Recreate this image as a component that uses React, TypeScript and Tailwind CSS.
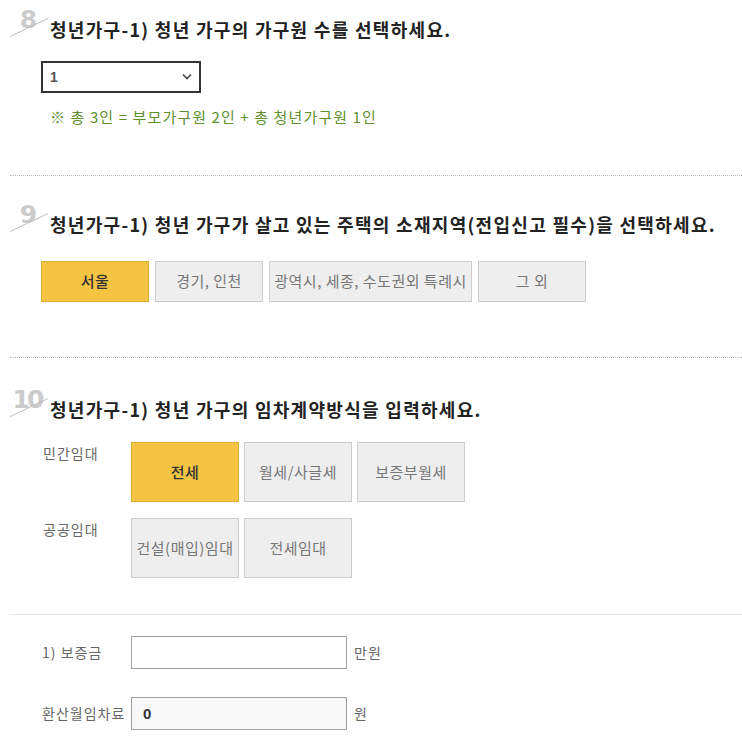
import React, { useState } from 'react';

const FONT = "font-['Noto_Sans_CJK_KR','Noto_Sans',sans-serif]";

const QuestionTitle: React.FC<{ num: string; title: string }> = ({ num, title }) => (
    <div className="relative h-[26px] pl-[40px] text-[18px] leading-[26px] font-bold text-[#222] tracking-[1.3px]">
        <span className="absolute left-0 top-[-9px] w-[34px] text-center font-['DejaVu_Sans',sans-serif] text-[25px] leading-[25px] font-bold tracking-[-3px] text-[#cbcbcb]">
            {num}
        </span>
        <svg className="absolute left-0 top-0" width="40" height="22" viewBox="0 0 40 22">
            <line x1="0" y1="20.5" x2="38" y2="2.5" stroke="#bdbdbd" strokeWidth="1" />
        </svg>
        <span className="relative">{title}</span>
    </div>
);

const Choice: React.FC<{
    label: string;
    active?: boolean;
    wide?: boolean;
    tall?: boolean;
    onClick?: () => void;
}> = ({ label, active, wide, tall, onClick }) => (
    <button
        onClick={onClick}
        className={
            'flex items-center justify-center whitespace-nowrap overflow-hidden border text-[15px] tracking-[0.5px] ' +
            (wide ? 'w-[203px] ' : 'w-[108px] ') +
            (tall ? 'h-[60px] ' : 'h-[41px] ') +
            (active
                ? 'bg-[#f6c443] border-[#dcae33] text-[#333] font-medium'
                : 'bg-[#eeeeee] border-[#cccccc] text-[#777]')
        }
    >
        {label}
    </button>
);

export default function App() {
    const [region, setRegion] = useState('서울');
    const [lease, setLease] = useState('전세');
    const [deposit, setDeposit] = useState('');

    return (
        <div className={`${FONT} w-[742px] pl-[10px] bg-white pb-[19px]`}>
            {/* 8 */}
            <div className="pt-[16px]">
                <QuestionTitle num="8" title="청년가구-1) 청년 가구의 가구원 수를 선택하세요." />
                <div className="pl-[31px] mt-[19px]">
                    <div className="relative w-[160px] h-[32px]">
                        <select className="w-full h-full appearance-none border-2 border-[#333] bg-white pl-[7px] text-[14px] font-bold text-[#555] font-['Liberation_Sans',sans-serif]">
                            <option>1</option>
                            <option>2</option>
                            <option>3</option>
                        </select>
                        <svg className="absolute right-[9px] top-[12px] pointer-events-none" width="10" height="7" viewBox="0 0 10 7">
                            <path d="M1 1.5 L5 5.5 L9 1.5" fill="none" stroke="#444" strokeWidth="1.6" />
                        </svg>
                    </div>
                </div>
                <p className="pl-[40px] mt-[14px] text-[15px] leading-[20px] tracking-[1.1px] text-[#5f8f2f]">
                    ※ 총 3인 = 부모가구원 2인 + 총 청년가구원 1인
                </p>
            </div>

            <div className="mt-[48px] border-t border-dotted border-[#bbbbbb]" />

            {/* 9 */}
            <div className="mt-[35px]">
                <QuestionTitle num="9" title="청년가구-1) 청년 가구가 살고 있는 주택의 소재지역(전입신고 필수)을 선택하세요." />
                <div className="pl-[31px] mt-[24px] flex gap-[6px]">
                    {['서울', '경기, 인천', '광역시, 세종, 수도권외 특례시', '그 외'].map(r => (
                        <Choice
                            key={r}
                            label={r}
                            wide={r.length > 10}
                            active={region === r}
                            onClick={() => setRegion(r)}
                        />
                    ))}
                </div>
            </div>

            <div className="mt-[55px] border-t border-dotted border-[#bbbbbb]" />

            {/* 10 */}
            <div className="mt-[38px]">
                <QuestionTitle num="10" title="청년가구-1) 청년 가구의 임차계약방식을 입력하세요." />
                <div className="pl-[31px] mt-[20px] flex flex-col gap-[16px]">
                    <div className="flex">
                        <div className="w-[90px] pl-[2px] pt-[1px] text-[14px] leading-[20px] tracking-[1px] text-[#666]">민간임대</div>
                        <div className="flex gap-[5px]">
                            {['전세', '월세/사글세', '보증부월세'].map(l => (
                                <Choice key={l} label={l} tall active={lease === l} onClick={() => setLease(l)} />
                            ))}
                        </div>
                    </div>
                    <div className="flex">
                        <div className="w-[90px] pl-[2px] pt-[1px] text-[14px] leading-[20px] tracking-[1px] text-[#666]">공공임대</div>
                        <div className="flex gap-[5px]">
                            {['건설(매입)임대', '전세임대'].map(l => (
                                <Choice key={l} label={l} tall active={lease === l} onClick={() => setLease(l)} />
                            ))}
                        </div>
                    </div>
                </div>
            </div>

            <div className="mt-[36px] border-t border-[#e6e6e6]" />

            <div className="pl-[31px] mt-[21px] flex flex-col gap-[28px]">
                <div className="flex items-center">
                    <div className="w-[90px] pl-[1px] text-[14px] tracking-[1px] text-[#666]">1) 보증금</div>
                    <input
                        value={deposit}
                        onChange={e => setDeposit(e.target.value)}
                        className="w-[216px] h-[33px] border border-[#a0a0a0] bg-white px-[11px] text-[15px] outline-none"
                    />
                    <span className="ml-[7px] text-[14px] tracking-[1px] text-[#666]">만원</span>
                </div>
                <div className="flex items-center">
                    <div className="w-[90px] pl-[1px] text-[14px] tracking-[1px] text-[#666] whitespace-nowrap">환산월임차료</div>
                    <input
                        value="0"
                        readOnly
                        className="w-[216px] h-[33px] border border-[#a0a0a0] bg-[#f8f8f8] px-[11px] text-[15px] font-bold text-[#333] font-['Liberation_Sans',sans-serif] outline-none"
                    />
                    <span className="ml-[7px] text-[14px] text-[#666]">원</span>
                </div>
            </div>
        </div>
    );
}
